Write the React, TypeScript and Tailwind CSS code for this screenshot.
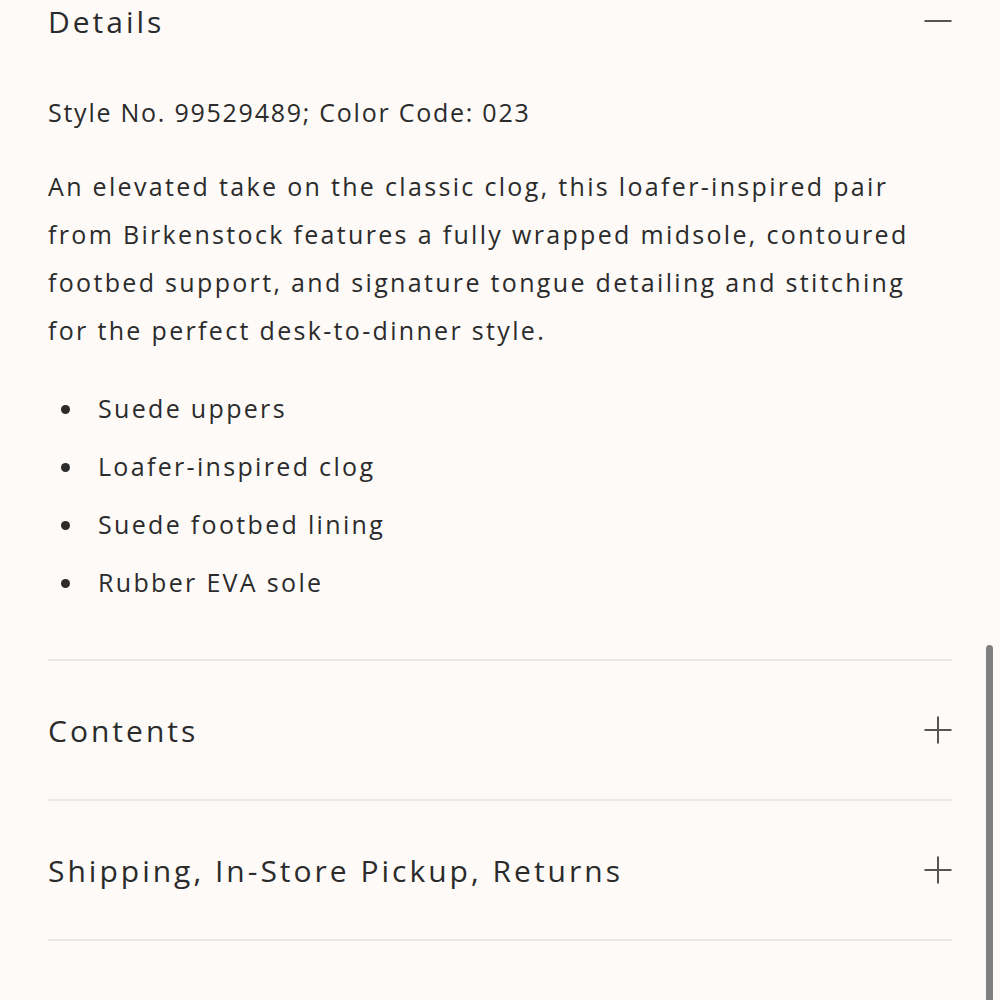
const bullets = ['Suede uppers', 'Loafer-inspired clog', 'Suede footbed lining', 'Rubber EVA sole']

function Icon({ open }: { open?: boolean }) {
  return (
    <svg width="28" height="28" viewBox="0 0 28 28" className="text-[#555]">
      <line x1="0.5" y1="14" x2="27.5" y2="14" stroke="currentColor" strokeWidth="2" />
      {!open && <line x1="14" y1="0.5" x2="14" y2="27.5" stroke="currentColor" strokeWidth="2" />}
    </svg>
  )
}

function Row({ title }: { title: string }) {
  return (
    <div className="flex h-[140px] items-center justify-between border-b-2 border-[#ebe8e6]">
      <h2 className="text-[30px] tracking-[0.1em] text-[#2b2b2b]">{title}</h2>
      <Icon />
    </div>
  )
}

export default function App() {
  return (
    <div className="relative min-h-screen overflow-hidden bg-[#fdfaf8] font-['Open_Sans',sans-serif]">
      <div className="px-12">
        <div className="border-b-2 border-[#ebe8e6] pb-[56px]">
          <div className="flex h-[42px] items-center justify-between">
            <h2 className="text-[30px] tracking-[0.1em] text-[#2b2b2b]">Details</h2>
            <Icon open />
          </div>
          <p className="mt-[50px] text-[25px] leading-[40px] tracking-[0.07em] text-[#2b2b2b]">
            Style No. 99529489; Color Code: 023
          </p>
          <p className="mt-[30px] text-[25px] leading-[48px] tracking-[0.093em] text-[#2b2b2b]">
            An elevated take on the classic clog, this loafer-inspired pair
            <br />
            from Birkenstock features a fully wrapped midsole, contoured
            <br />
            footbed support, and signature tongue detailing and stitching
            <br />
            for the perfect desk-to-dinner style.
          </p>
          <ul className="mt-[35px] flex flex-col gap-[18px]">
            {bullets.map((b) => (
              <li key={b} className="flex h-[40px] items-center text-[25px] tracking-[0.093em] text-[#2b2b2b]">
                <span className="ml-[13px] mr-[28px] h-[9px] w-[9px] rounded-full bg-[#2b2b2b]" />
                {b}
              </li>
            ))}
          </ul>
        </div>
        <Row title="Contents" />
        <Row title="Shipping, In-Store Pickup, Returns" />
      </div>
      <div className="absolute right-[7px] top-[645px] h-[400px] w-[7px] rounded-full bg-[#808080]" />
    </div>
  )
}
